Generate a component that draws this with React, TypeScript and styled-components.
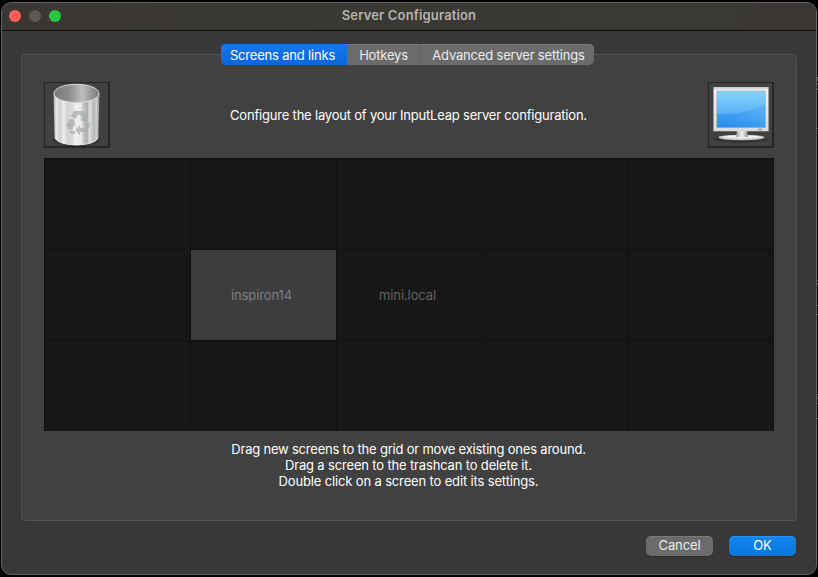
import React from 'react';
import styled, { createGlobalStyle } from 'styled-components';

const GlobalStyle = createGlobalStyle`
  * { box-sizing: border-box; }
  html, body { margin: 0; background: #000; overflow: hidden; }
  body { font-family: Inter, "Liberation Sans", sans-serif; font-size: 13px; color: #fff; -webkit-font-smoothing: antialiased; }
  button { font: inherit; border: 0; padding: 0; }
`;

const Desktop = styled.div`
  display: flex;
  width: 818px;
  height: 577px;
  padding: 2px 0 2px 1px;
  background: #000;
`;

const Window = styled.main`
  flex: none;
  width: 816px;
  height: 573px;
  display: flex;
  flex-direction: column;
  background: #383838;
  border: 1px solid #636363;
  border-radius: 10px;
  overflow: hidden;
`;

/* Sliver of the window behind, visible past the right edge */
const BackgroundEdge = styled.div`
  flex: none;
  width: 1px;
  height: 573px;
  background: linear-gradient(
    #000 75px, #555 75px 79px, #000 79px 81px, #555 81px 83px, #000 83px 86px, #444 86px 88px,
    #000 88px 126px, #555 126px 127px, #000 127px 278px, #555 278px 279px, #000 279px 281px,
    #555 281px 283px, #000 283px 303px, #555 303px 304px, #000 304px 312px, #555 312px 313px,
    #000 313px 392px, #555 392px 393px, #000 393px 395px, #555 395px 397px, #000 397px 401px,
    #555 401px 402px, #000 402px 416px, #444 416px 417px, #000 417px
  );
`;

const TitleBar = styled.header`
  flex: none;
  height: 28px;
  display: grid;
  grid-template-columns: 80px 1fr 80px;
  align-items: center;
  background: linear-gradient(90deg, #3a3634, #3a3833 25%, #3a3933 90%, #3b3634 93%);
  border-bottom: 1px solid #0c0c0c;
`;

const Lights = styled.div`
  display: flex;
  gap: 8px;
  padding: 0 0 1px 7px;
`;

const Light = styled.span<{ $color: string }>`
  width: 12px;
  height: 12px;
  border-radius: 50%;
  background: ${p => p.$color};
`;

const Title = styled.h1`
  margin: 0;
  padding-bottom: 3px;
  text-align: center;
  font-size: 13px;
  line-height: 16px;
  font-weight: 600;
  letter-spacing: 0.15px;
  color: #b5b4b2;
`;

const Tabs = styled.nav`
  position: relative;
  z-index: 1;
  flex: none;
  display: flex;
  width: 373px;
  height: 21px;
  margin: 13px 0 -11px 219px;
  border-radius: 5px;
  overflow: hidden;
  background: #6b6b6b;
  box-shadow: inset 0 1px 0 #777;
`;

const Tab = styled.button<{ $width: number; $active?: boolean; $divider?: boolean; $inset?: number }>`
  width: ${p => p.$width}px;
  height: 21px;
  padding-left: ${p => p.$inset ?? 0}px;
  line-height: 22px;
  white-space: nowrap;
  letter-spacing: -0.19px;
  color: ${p => (p.$active ? '#fff' : '#ebebeb')};
  background: ${p => (p.$active ? 'linear-gradient(#1478f4, #0c66d8)' : 'transparent')};
  border-right: ${p => (p.$divider ? '1px solid #626262' : '0')};
  padding-right: ${p => (p.$active ? 3 : 0)}px;
`;

const Panel = styled.section`
  flex: none;
  width: 776px;
  height: 467px;
  margin-left: 19px;
  padding: 27px 22px 0;
  background: #414141;
  border: 1px solid #535353;
  border-radius: 4px;
`;

const Header = styled.div`
  display: flex;
  justify-content: space-between;
  align-items: center;
  width: 730px;
  height: 66px;
`;

const IconBox = styled.div`
  width: 66px;
  height: 66px;
  border: 1px solid #262626;
  border-width: 1px 2px 2px 1px;
  svg { display: block; }
`;

const Message = styled.p<{ $spacing: number }>`
  margin: 0;
  padding-right: 1px;
  text-align: center;
  line-height: 16px;
  white-space: nowrap;
  letter-spacing: ${p => p.$spacing}px;
`;

const ScreenGrid = styled.div`
  display: grid;
  grid-template-columns: repeat(4, 145px) 144px;
  grid-template-rows: repeat(3, 90px);
  gap: 1px;
  width: 730px;
  height: 273px;
  margin-top: 10px;
  padding: 1px;
  background: #101010;
`;

const Screen = styled.div<{ $selected?: boolean }>`
  display: flex;
  align-items: center;
  justify-content: center;
  padding-right: 4px;
  letter-spacing: -0.1px;
  background: ${p => (p.$selected ? '#3d3d3d' : '#171717')};
  color: ${p => (p.$selected ? '#7d7d7d' : '#626262')};
`;

const Hints = styled.div`
  margin-top: 10px;
`;

const Actions = styled.footer`
  display: flex;
  justify-content: flex-end;
  gap: 16px;
  padding: 15px 20px 0 0;
`;

const ActionButton = styled.button<{ $primary?: boolean }>`
  width: 67px;
  height: 20px;
  padding-bottom: 1px;
  line-height: 19px;
  letter-spacing: -0.1px;
  border-radius: 5px;
  color: ${p => (p.$primary ? '#fff' : '#ebebeb')};
  background: ${p => (p.$primary ? 'linear-gradient(#1487f2, #0876dc)' : '#6b6b6b')};
  box-shadow: inset 0 1px 0 rgba(255,255,255,.1), 0 1px 1px rgba(0,0,0,.25);
`;

const TrashIcon = () => (
  <svg width="63" height="63" viewBox="0 0 63 63">
    <defs>
      <linearGradient id="can">
        <stop offset="0" stopColor="#b0b0b0" /><stop offset=".06" stopColor="#e6e6e6" />
        <stop offset=".14" stopColor="#cecece" /><stop offset=".22" stopColor="#eeeeee" />
        <stop offset=".3" stopColor="#d2d2d2" /><stop offset=".42" stopColor="#dcdcdc" />
        <stop offset=".47" stopColor="#f0f0f0" /><stop offset=".6" stopColor="#eaeaea" />
        <stop offset=".66" stopColor="#c2c2c2" /><stop offset=".74" stopColor="#b0b0b0" />
        <stop offset=".78" stopColor="#e0e0e0" /><stop offset=".88" stopColor="#b8b8b8" />
        <stop offset=".94" stopColor="#cecece" /><stop offset="1" stopColor="#8d8d8d" />
      </linearGradient>
      <linearGradient id="mouth">
        <stop offset="0" stopColor="#777" /><stop offset=".35" stopColor="#8e8e8e" />
        <stop offset=".62" stopColor="#bebebe" /><stop offset="1" stopColor="#777" />
      </linearGradient>
    </defs>
    <ellipse cx="31.500" cy="56" rx="24" ry="7" fill="#222" opacity=".45" />
    <path d="M8.600 11 9.600 53.500C10 65 53 65 53.400 53.500L54.400 11Z" fill="url(#can)" />
    <path d="M9.800 54C11 64.500 52 64.500 53.200 54" fill="none" stroke="#f0f0f0" strokeWidth=".8" />
    <ellipse cx="31.500" cy="10.400" rx="22.500" ry="9.100" fill="url(#mouth)" stroke="#dadada" strokeWidth="1" />
    <g fill="#a8aeae" opacity=".75">
      <path d="M26 33 29 28H38L41 33 43 31 42 39 35 37 37 35 34 31 30 36Z" />
      <path d="M22 37 29 36 31 43 29 42 27 47H24L21 42 24 38Z" />
      <path d="M44 38 45 43 42 49H35V52L30 47 35 42V45H40L42 43 40 40Z" />
      <path d="M24 48H30V51H26Z" />
    </g>
  </svg>
);

const MonitorIcon = () => (
  <svg width="63" height="63" viewBox="0 0 63 63">
    <defs>
      <linearGradient id="display" x2="0" y2="1">
        <stop stopColor="#86d4fb" /><stop offset="1" stopColor="#3f9df2" />
      </linearGradient>
      <linearGradient id="glow" x1="0" y1="1" x2=".7" y2="0">
        <stop stopColor="#2788ec" /><stop offset="1" stopColor="#55b2f7" />
      </linearGradient>
      <linearGradient id="bezel" x2="0" y2="1">
        <stop stopColor="#c9c9c9" /><stop offset=".08" stopColor="#f4f4f4" /><stop offset="1" stopColor="#dadada" />
      </linearGradient>
      <linearGradient id="neck">
        <stop stopColor="#999" /><stop offset=".5" stopColor="#f6f6f6" /><stop offset="1" stopColor="#8b8b8b" />
      </linearGradient>
    </defs>
    <ellipse cx="32" cy="56.500" rx="28" ry="3" fill="#292929" opacity=".6" />
    <ellipse cx="32.500" cy="54.500" rx="23" ry="2.700" fill="#d0d0d0" />
    <ellipse cx="32.500" cy="53.700" rx="18" ry="1.500" fill="#f2f2f2" />
    <path d="M28 47H38L39 54H27Z" fill="url(#neck)" />
    <path d="M4 4H60V48.300H4Z" fill="url(#bezel)" />
    <path d="M4.500 4V48M59.500 4V48" stroke="#989898" />
    <path d="M7.800 8H56.500V44.500H7.800Z" fill="url(#display)" stroke="#a9b4bb" strokeWidth=".7" />
    <path d="M8.200 31C28 32 46 27 56.200 22V44.200H8.200Z" fill="url(#glow)" />
    <path d="M49 47.300V46Q51 44.800 53 46V47.300Z" fill="#999" />
  </svg>
);

const screens = Array.from({ length: 15 }, (_, i) => (i === 6 ? 'inspiron14' : i === 7 ? 'mini.local' : ''));

export default function App() {
  return (
    <Desktop>
      <GlobalStyle />
      <Window>
        <TitleBar>
          <Lights><Light $color="#ff5f57" /><Light $color="#5b5958" /><Light $color="#28c840" /></Lights>
          <Title>Server Configuration</Title>
        </TitleBar>
        <Tabs>
          <Tab $active $width={126}>Screens and links</Tab>
          <Tab $divider $width={73} $inset={1}>Hotkeys</Tab>
          <Tab $width={174} $inset={3}>Advanced server settings</Tab>
        </Tabs>
        <Panel>
          <Header>
            <IconBox><TrashIcon /></IconBox>
            <Message $spacing={-0.2}>Configure the layout of your InputLeap server configuration.</Message>
            <IconBox><MonitorIcon /></IconBox>
          </Header>
          <ScreenGrid>
            {screens.map((name, i) => <Screen key={i} $selected={i === 6}>{name}</Screen>)}
          </ScreenGrid>
          <Hints>
            <Message $spacing={-0.21}>Drag new screens to the grid or move existing ones around.</Message>
            <Message $spacing={-0.16}>Drag a screen to the trashcan to delete it.</Message>
            <Message $spacing={-0.15}>Double click on a screen to edit its settings.</Message>
          </Hints>
        </Panel>
        <Actions>
          <ActionButton>Cancel</ActionButton>
          <ActionButton $primary>OK</ActionButton>
        </Actions>
      </Window>
      <BackgroundEdge />
    </Desktop>
  );
}
